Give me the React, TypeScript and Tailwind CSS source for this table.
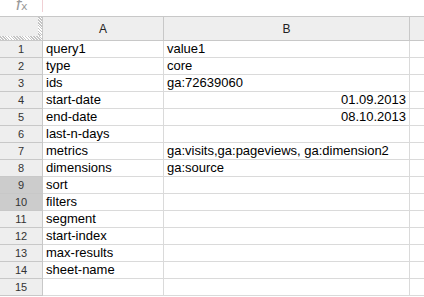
const rows: [string, string, boolean?][] = [
  ["query1", "value1"],
  ["type", "core"],
  ["ids", "ga:72639060"],
  ["start-date", "01.09.2013", true],
  ["end-date", "08.10.2013", true],
  ["last-n-days", ""],
  ["metrics", "ga:visits,ga:pageviews, ga:dimension2"],
  ["dimensions", "ga:source"],
  ["sort", ""],
  ["filters", ""],
  ["segment", ""],
  ["start-index", ""],
  ["max-results", ""],
  ["sheet-name", ""],
  ["", ""],
];

const hatch =
  "bg-[repeating-linear-gradient(45deg,#c4c4c4_0px,#c4c4c4_1px,#ffffff_1px,#ffffff_2px)]";

export default function App() {
  return (
    <div className="w-[424px] h-[297px] overflow-hidden bg-white font-['Liberation_Sans',Arial,sans-serif] text-black">
      {/* Formula bar */}
      <div className="h-[16px] flex items-start">
        <div className="w-[42px] h-[13px] flex items-end justify-center pl-[1px]">
          <span className="font-['DejaVu_Sans',sans-serif] italic text-[16px] leading-[13px] text-[#9a9a9a]">
            f<span className="not-italic text-[11px]">x</span>
          </span>
        </div>
        <div className="w-px h-[12px] bg-[#f0d0d4]" />
      </div>

      {/* Grid */}
      <div className="grid grid-cols-[43px_121px_246px_1fr] border-t border-[#c8c8c8]">
        {/* header */}
        <div className="relative h-[24px] bg-[#eeeeee] border-r border-b border-[#c8c8c8]">
          <div className={`absolute right-0 top-0 w-[4px] h-full ${hatch}`} />
          <div className={`absolute left-0 bottom-0 h-[4px] w-full ${hatch}`} />
        </div>
        <div className="h-[24px] bg-[#eeeeee] border-r border-b border-[#c8c8c8] flex items-center justify-center text-[12px] text-[#222]">
          A
        </div>
        <div className="h-[24px] bg-[#eeeeee] border-r border-b border-[#c8c8c8] flex items-center justify-center text-[12px] text-[#222]">
          B
        </div>
        <div className="h-[24px] bg-[#eeeeee] border-b border-[#c8c8c8]" />

        {rows.map(([k, v, right], i) => {
          const sel = i === 8 || i === 9;
          return [
            <div
              key={`n${i}`}
              className={`h-[17px] border-r border-b border-[#c8c8c8] flex items-center justify-center text-[11px] text-[#333] ${
                sel ? "bg-[#cccccc]" : "bg-[#eeeeee]"
              }`}
            >
              {i + 1}
            </div>,
            <div
              key={`a${i}`}
              className="h-[17px] border-r border-b border-[#dadada] px-[3px] flex items-center text-[13px] whitespace-nowrap overflow-hidden"
            >
              {k}
            </div>,
            <div
              key={`b${i}`}
              className={`h-[17px] border-r border-b border-[#dadada] px-[3px] flex items-center text-[13px] whitespace-nowrap overflow-hidden ${
                right ? "justify-end" : ""
              }`}
            >
              {v}
            </div>,
            <div key={`c${i}`} className="h-[17px] border-b border-[#dadada]" />,
          ];
        })}
      </div>
    </div>
  );
}
